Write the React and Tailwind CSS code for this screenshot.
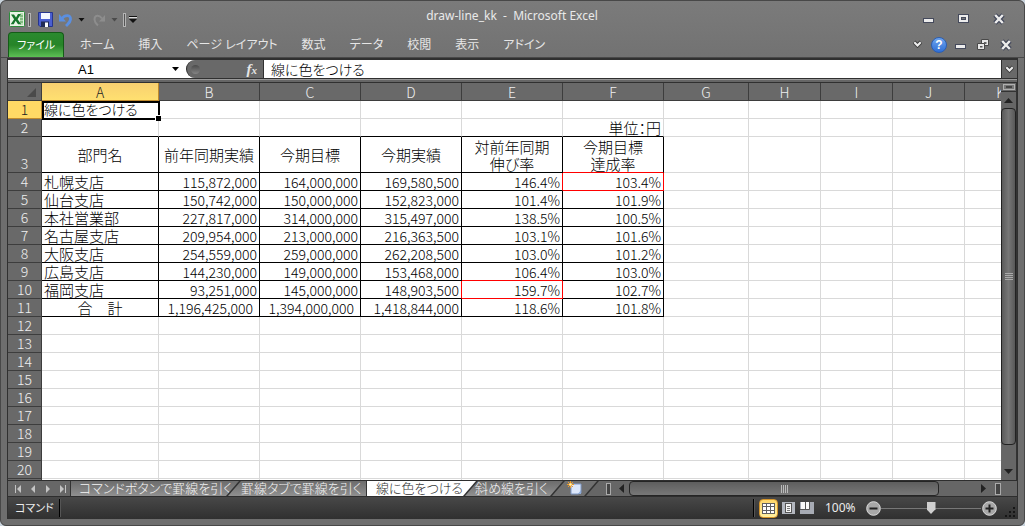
import React from "react";

const COLS = ["A", "B", "C", "D", "E", "F", "G", "H", "I", "J", "K"];
const COL_WIDTHS = ["w-[117px]", "w-[101px]", "w-[101px]", "w-[101px]", "w-[101px]", "w-[101px]", "w-[85px]", "w-[72px]", "w-[72px]", "w-[72px]", ""];

const ROWS = {
  1: ["線に色をつける"],
  2: ["", "", "", "", "", "単位：円"],
  3: ["部門名", "前年同期実績", "今期目標", "今期実績", "対前年同期\n伸び率", "今期目標\n達成率"],
  4: ["札幌支店", "115,872,000", "164,000,000", "169,580,500", "146.4%", "103.4%"],
  5: ["仙台支店", "150,742,000", "150,000,000", "152,823,000", "101.4%", "101.9%"],
  6: ["本社営業部", "227,817,000", "314,000,000", "315,497,000", "138.5%", "100.5%"],
  7: ["名古屋支店", "209,954,000", "213,000,000", "216,363,500", "103.1%", "101.6%"],
  8: ["大阪支店", "254,559,000", "259,000,000", "262,208,500", "103.0%", "101.2%"],
  9: ["広島支店", "144,230,000", "149,000,000", "153,468,000", "106.4%", "103.0%"],
  10: ["福岡支店", "93,251,000", "145,000,000", "148,903,500", "159.7%", "102.7%"],
  11: ["合　計", "1,196,425,000", "1,394,000,000", "1,418,844,000", "118.6%", "101.8%"],
};

const RED_RIGHT = ["E4", "F4", "D10", "E10"];
const RED_BOTTOM = ["F3", "F4", "E9", "E10"];

function borderClasses(row, c) {
  const key = COLS[c] + row;
  const inTable = c < 6;
  let right = "border-r-[#d9d9d9]";
  let bottom = "border-b-[#d9d9d9]";
  if (inTable && row >= 3 && row <= 11) right = "border-r-black";
  if (inTable && row >= 2 && row <= 11) bottom = "border-b-black";
  if (RED_RIGHT.includes(key)) right = "border-r-[#ff0000]";
  if (RED_BOTTOM.includes(key)) bottom = "border-b-[#ff0000]";
  return right + " " + bottom;
}

function alignClasses(row, c) {
  if (row === 3) return "text-center whitespace-pre-line leading-[17px]";
  if (row === 2) return "pr-0.5 text-right leading-[17px]";
  if (c === 0) return "leading-[17px] " + (row === 11 ? "text-center" : "pl-0.5 text-left");
  const line = "pt-0.5 leading-[15px] text-right [font-feature-settings:normal] ";
  return line + (row === 11 && c < 3 ? "pr-1.5" : "pr-0.5");
}

function Cell({ row, c }) {
  const text = (ROWS[row] || [])[c] || "";
  const kanji = row === 2 || row === 3 || (c === 0 && row > 3);
  return (
    <td className={`relative border-r border-b p-0 whitespace-nowrap ${kanji ? "text-[15px]" : "text-sm"} ${borderClasses(row, c)} ${alignClasses(row, c)}`}>
      {text}
      {row === 1 && c === 0 && (
        <div className="pointer-events-none absolute top-0 left-0 -right-0.5 -bottom-0.5 z-10 border-2 border-black">
          <div className="absolute -right-[3px] -bottom-[3px] size-[6px] border-t border-l border-white bg-black" />
        </div>
      )}
    </td>
  );
}

function Sheet() {
  const rows = Array.from({ length: 20 }, (_, i) => i + 1);
  return (
    <div className="min-h-0 min-w-0 flex-1 overflow-hidden bg-white [font-family:'Noto_Sans_CJK_JP',sans-serif]">
      <table className="w-[1029px] min-w-full table-fixed border-separate border-spacing-0 font-light text-black">
        <colgroup>
          <col className="w-[34px]" />
          {COLS.map((n, i) => <col key={n} className={COL_WIDTHS[i]} />)}
        </colgroup>
        <thead>
          <tr className="h-[18px]">
            <th className="border-r border-b border-[#3d3d3d] bg-[#696969] p-0">
              <svg className="ml-auto block h-3 w-3.5" viewBox="0 0 14 12"><path d="M9 2v9H0z" fill="#4a4a4a" /></svg>
            </th>
            {COLS.map((n, i) => (
              <th key={n} scope="col" className={`border-r border-b p-0 pt-0.5 text-sm leading-[15px] font-light ${i === 0 ? "border-[#c08a2c] bg-linear-to-b from-[#f8d070] to-[#ffe070] text-[#222]" : "border-[#3d3d3d] bg-[#696969] text-[#f0f0f0]"}`}>{n}</th>
            ))}
          </tr>
        </thead>
        <tbody>
          {rows.map((r) => (
            <tr key={r} className={r === 3 ? "h-9" : "h-[18px]"}>
              <th scope="row" className={`border-r border-b p-0 text-center align-bottom text-sm leading-[17px] font-light [font-feature-settings:normal] ${r === 1 ? "border-[#c08a2c] bg-[#ffd965] text-[#222]" : "border-[#3d3d3d] bg-[#696969] text-[#f0f0f0]"}`}>{r}</th>
              {COLS.map((n, c) => <Cell key={n} row={r} c={c} />)}
            </tr>
          ))}
          <tr className="h-[18px]">
            <td className="border-r border-[#3d3d3d] bg-[#696969]" />
            {COLS.map((n) => <td key={n} className="border-r border-[#d9d9d9]" />)}
          </tr>
        </tbody>
      </table>
    </div>
  );
}

function IconButton({ label, className, children }) {
  return <button type="button" aria-label={label} className={`flex shrink-0 items-center justify-center ${className}`}>{children}</button>;
}

const Minimize = () => (
  <svg width="12" height="12" viewBox="0 0 12 12"><rect x=".5" y="5.5" width="10" height="4" fill="#ececec" stroke="#454a5c" /></svg>
);
const Maximize = () => (
  <svg width="12" height="12" viewBox="0 0 12 12"><rect x=".5" y="1.5" width="10" height="8" fill="#ececec" stroke="#454a5c" /><rect x="3.5" y="4.5" width="4" height="2" fill="#777" stroke="#454a5c" /></svg>
);
const Close = () => (
  <svg width="12" height="12" viewBox="0 0 12 12"><path d="M2 2l8 8M10 2l-8 8" stroke="#454a5c" strokeWidth="4.6" /><path d="M2.2 2l7.6 8M9.8 2L2.2 10" stroke="#ececec" strokeWidth="2.4" /></svg>
);
const Restore = () => (
  <svg width="12" height="12" viewBox="0 0 12 12"><path d="M4.5.5h7v6h-7z" fill="#e8e8e8" stroke="#494949" /><path d="M7 3h2.500v2H7z" fill="#666" /><path d="M.5 4.500h7v6h-7z" fill="#e8e8e8" stroke="#494949" /><path d="M3 7h2.500v1.500H3z" fill="#555" /></svg>
);
const Chevron = ({ size = 9 }) => (
  <svg width={size} height={size} viewBox="0 0 9 9"><path d="M1 2l3.500 3.500L8 2" fill="none" stroke="#3d3d3d" strokeWidth="4" /><path d="M1.300 2.200l3.200 3.300 3.200-3.300" fill="none" stroke="#eee" strokeWidth="2" /></svg>
);

function TitleBar() {
  return (
    <header className="flex h-[29px] shrink-0 items-end pr-[19px] pl-2">
      <div className="flex h-[21px] w-[171px] shrink-0 items-center">
        <svg width="16" height="17" viewBox="0 0 16 17" aria-label="Excel">
          <rect x=".5" y=".5" width="15" height="15" rx="1" fill="#e9f4e6" stroke="#2e8b3c" />
          <path d="M11 2h3v12h-3z" fill="#b9dcb5" /><path d="M11 5h3M11 8h3M11 11h3" stroke="#4c9c50" />
          <path d="M2 3.500h3l2 3 2-3.500h3L8.600 8.200l3.600 5H9l-2.300-3.400-2 3.400H1.700l3.400-5z" fill="#16752c" />
        </svg>
        <span className="ml-[3px] h-3.5 w-[3px] border border-[#b5b5b5] bg-[#555]" />
        <IconButton label="上書き保存" className="ml-1.5 size-4">
          <svg width="15" height="15" viewBox="0 0 15 15"><path d="M.5.5h14v14H2L.5 13z" fill="#4b5fd0" stroke="#26358f" /><path d="M3 1h9v6H3z" fill="#f4f6ff" /><path d="M3 9.500h8V15H3z" fill="#222c55" /><path d="M7 10.500h3V15H7z" fill="#fff" /></svg>
        </IconButton>
        <IconButton label="元に戻す" className="ml-1.5 size-[14px]">
          <svg width="14" height="14" viewBox="0 0 14 14"><path d="M3 5.500C6 1.500 12 1.500 11.500 6.500 11.200 9.500 9 11 7 13" fill="none" stroke="#5b8fe0" strokeWidth="2.800" /><path d="M0 1v7.500h7z" fill="#5b8fe0" /></svg>
        </IconButton>
        <IconButton label="元に戻す操作の一覧" className="ml-1 size-[9px]"><svg width="7" height="5" viewBox="0 0 7 5"><path d="M.5 1h6L3.500 4.500z" fill="#111" /></svg></IconButton>
        <IconButton label="やり直し" className="ml-1.5 size-[14px]">
          <svg width="14" height="14" viewBox="0 0 14 14"><path d="M10 5.500C7 1.500 2.500 2 2.500 6.500 2.600 9.500 4.500 11 6 12.500" fill="none" stroke="#8d8d8d" strokeWidth="2" /><path d="M13 2v6.500H7z" fill="#8d8d8d" /></svg>
        </IconButton>
        <IconButton label="やり直し操作の一覧" className="ml-1 size-[9px]"><svg width="7" height="5" viewBox="0 0 7 5"><path d="M.5 1h6L3.500 4.500z" fill="#4b4b4b" /></svg></IconButton>
        <span className="mr-0.5 ml-1 h-3.5 w-[3px] shrink-0 border border-[#b5b5b5] bg-[#555]" />
        <IconButton label="クイック アクセス ツール バーのユーザー設定" className="size-[9px]"><svg width="8" height="9" viewBox="0 0 8 9"><path d="M0 1.500h8" stroke="#111" /><path d="M0 2.500h8" stroke="#ddd" /><path d="M0 4h8L4 8z" fill="#111" /></svg></IconButton>
      </div>
      <h1 className="flex-1 self-center whitespace-pre text-center text-xs leading-4 font-normal text-[#e9e9e9] [font-family:'Noto_Sans',sans-serif]">draw-line_kk  -  Microsoft Excel</h1>
      <div className="flex h-[23px] w-[161px] shrink-0 items-center justify-end gap-[23px]">
        <IconButton label="最小化" className="size-3"><Minimize /></IconButton>
        <IconButton label="最大化" className="size-3"><Maximize /></IconButton>
        <IconButton label="閉じる" className="size-3"><Close /></IconButton>
      </div>
    </header>
  );
}

function Ribbon() {
  const tabs = ["ホーム", "挿入", "ページ レイアウト", "数式", "データ", "校閲", "表示", "アドイン"];
  return (
    <nav className="flex h-7 shrink-0 items-end border-b border-[#494949] pr-3 pl-[7px] text-xs">
      <button type="button" className="h-[25px] w-14 rounded-t-sm border border-b-0 border-[#145c17] bg-linear-to-b from-[#2b8a2f] via-[#268428] to-[#5dc055] text-[11px] text-white">ファイル</button>
      <div className="ml-4 flex h-[25px] flex-1 items-center gap-6 text-[#e6e6e6]">
        {tabs.map((t) => <button type="button" key={t} className="whitespace-nowrap">{t}</button>)}
      </div>
      <div className="flex h-[25px] shrink-0 items-center">
        <IconButton label="リボンの最小化" className="mr-[9px] size-[9px]"><Chevron /></IconButton>
        <IconButton label="ヘルプ" className="mr-2 size-4 rounded-full border border-[#2b5eb4] bg-linear-to-b from-[#6fa5ee] to-[#2f6fd6] font-bold leading-none text-white">?</IconButton>
        <IconButton label="ブックを最小化" className="mr-[10px] size-3"><Minimize /></IconButton>
        <IconButton label="ウィンドウを元のサイズに戻す" className="mr-[11px] size-3"><Restore /></IconButton>
        <IconButton label="ブックを閉じる" className="size-3"><Close /></IconButton>
      </div>
    </nav>
  );
}

function FormulaBar() {
  return (
    <div className="flex h-[21px] shrink-0 border-y-2 border-b border-[#303030] bg-[#5c5c5c]">
      <div className="flex w-[178px] shrink-0 bg-white">
        <input aria-label="名前ボックス" defaultValue="A1" className="h-full w-[156px] min-w-0 text-center text-[13px] text-black outline-none" />
        <IconButton label="名前の一覧" className="w-[22px]"><svg width="7" height="4" viewBox="0 0 7 4"><path d="M0 0h7L3.500 4z" fill="#000" /></svg></IconButton>
      </div>
      <div className="flex w-[77px] shrink-0 items-center justify-between bg-white">
        <div className="flex h-full flex-1 items-center justify-between rounded-l-full border-l border-[#2b2b2b] bg-[#696969] pr-1.5 pl-1">
          <span className="size-[9px] rounded-full bg-linear-to-b from-[#4b4b4b] to-[#858585]" />
          <button type="button" aria-label="関数の挿入" className="text-[15px] leading-none font-bold text-[#e6e6e6] italic [font-family:'Liberation_Serif',serif]">f<span className="text-[11px]">x</span></button>
        </div>
      </div>
      <input aria-label="数式バー" defaultValue="線に色をつける" className="min-w-0 flex-1 border-l border-[#303030] bg-white pl-[7px] text-sm font-light text-black outline-none [font-family:'Noto_Sans_CJK_JP',sans-serif]" />
      <IconButton label="数式バーの展開" className="w-4 border-l border-[#303030] bg-[#696969]"><Chevron /></IconButton>
    </div>
  );
}

function VerticalScroll() {
  return (
    <div className="flex w-4 shrink-0 flex-col items-stretch border-r border-[#333] bg-[#666]">
      <div className="flex h-[9px] items-center justify-center border-b border-[#333]"><span className="h-[6px] w-3 border border-[#b0b0b0] bg-[#777]"><span className="mx-auto mt-px block h-0.5 w-1.5 bg-[#444]" /></span></div>
      <IconButton label="上へスクロール" className="h-4"><svg width="9" height="5" viewBox="0 0 9 5"><path d="M0 5l4.500-5L9 5z" fill="#222" /></svg></IconButton>
      <div className="flex flex-1 flex-col items-center justify-center gap-px rounded-sm border border-[#222] bg-linear-to-r from-[#5b5b5b] via-[#777] to-[#585858]">
        {[0, 1, 2, 3].map((i) => <span key={i} className="h-px w-2 bg-[#aaa]" />)}
      </div>
      <IconButton label="下へスクロール" className="mt-[22px] mb-1 h-[9px]"><svg width="9" height="5" viewBox="0 0 9 5"><path d="M0 0h9L4.500 5z" fill="#222" /></svg></IconButton>
    </div>
  );
}

function NavIcon({ label, d }) {
  return <IconButton label={label} className="size-[15px]"><svg width="8" height="8" viewBox="0 0 8 8"><path d={d} fill="#c4c4c4" /></svg></IconButton>;
}

function SheetTabs() {
  const base = "h-[15px] shrink-0 whitespace-nowrap text-[13px] leading-[13px] pb-0.5 font-light";
  const idle = "bg-linear-to-b from-[#6c6c6c] to-[#909090] text-[#f4f4f4]";
  return (
    <div className="flex h-[17px] shrink-0 items-start overflow-hidden border-y border-[#2e2e2e] bg-[#444]">
      <div className="flex h-full w-[62px] shrink-0 items-center bg-[#676767] pl-0.5">
        <NavIcon label="先頭のシート" d="M1 0h1v8H1zM7 0v8L3 4z" />
        <NavIcon label="前のシート" d="M6 0v8L2 4z" />
        <NavIcon label="次のシート" d="M2 0v8l4-4z" />
        <NavIcon label="最後のシート" d="M6 0h1v8H6zM1 0v8l4-4z" />
      </div>
      <div className="flex h-full w-[534px] shrink-0 bg-[#333] [font-family:'Noto_Sans_CJK_JP',sans-serif]">
        <button type="button" className={`${base} ${idle} ml-px w-[168px] pl-2 text-left [clip-path:polygon(0_0,100%_0,calc(100%-13px)_100%,0_100%)]`}>コマンドボタンで罫線を引く</button>
        <button type="button" className={`${base} ${idle} -ml-[11px] w-[138px] pl-[13px] text-left [clip-path:polygon(13px_0,100%_0,100%_100%,0_100%)]`}>罫線タブで罫線を引く</button>
        <button type="button" className={`${base} ml-px w-[109px] bg-white pl-[9px] text-left text-[#333] [clip-path:polygon(0_0,100%_0,calc(100%-13px)_100%,0_100%)]`}>線に色をつける</button>
        <button type="button" className={`${base} ${idle} -ml-[11px] w-[98px] pl-[10px] text-left [clip-path:polygon(13px_0,100%_0,calc(100%-13px)_100%,0_100%)]`}>斜め線を引く</button>
        <button type="button" aria-label="ワークシートの挿入" className={`${base} -ml-[11px] flex w-[45px] items-center justify-center bg-[#707070] [clip-path:polygon(13px_0,100%_0,calc(100%-13px)_100%,0_100%)]`}>
          <svg width="15" height="14" viewBox="0 0 15 14" className="shrink-0"><path d="M4 3h10v9l-3 1H4z" fill="#dce7fa" stroke="#7e98c5" /><path d="M14 9l-3 4h3z" fill="#8eabd9" /><path d="M3.500 0v7M0 3.500h7M1 1l5 5M6 1L1 6" stroke="#f19b24" /><circle cx="3.500" cy="3.500" r="1.200" fill="#fff4b0" /></svg>
        </button>
        <span className={`${base} -ml-[11px] flex-1 bg-[#666] [clip-path:polygon(13px_0,100%_0,100%_100%,0_100%)]`} />
      </div>
      <div className="flex h-full min-w-0 flex-1 items-center bg-[#666]">
        <span className="mx-0.5 h-3 w-[5px] border border-[#aaa] bg-[#444]" />
        <IconButton label="左へスクロール" className="h-full w-4"><svg width="5" height="9" viewBox="0 0 5 9"><path d="M5 0v9L0 4.500z" fill="#222" /></svg></IconButton>
        <div className="flex h-full flex-1 items-center justify-center gap-px rounded-sm border border-[#252525] bg-linear-to-b from-[#5e5e5e] to-[#787878]">
          {[0, 1, 2, 3].map((i) => <span key={i} className="h-2 w-px bg-[#bbb]" />)}
        </div>
        <IconButton label="右へスクロール" className="ml-9 h-full w-4"><svg width="5" height="9" viewBox="0 0 5 9"><path d="M0 0v9l5-4.500z" fill="#222" /></svg></IconButton>
        <span className="mr-4 ml-1 h-3 w-[6px] border border-[#aaa] bg-[#444]" />
      </div>
    </div>
  );
}

function StatusBar() {
  return (
    <footer className="flex h-[22px] shrink-0 items-center bg-linear-to-b from-[#484848] to-[#303030] text-xs text-[#ececec]">
      <span className="w-[51px] shrink-0 pl-[7px] text-[11px] whitespace-nowrap">コマンド</span>
      <span className="h-[18px] w-0.5 border-l border-black bg-[#555]" />
      <div className="flex-1" />
      <span className="h-[18px] w-0.5 border-l border-black bg-[#555]" />
      <IconButton label="標準" className="ml-1 size-[19px] rounded-sm border border-[#d5952a] bg-linear-to-b from-[#ffd768] to-[#fff0a0]">
        <svg width="13" height="11" viewBox="0 0 13 11"><rect width="13" height="11" fill="#606060" /><path d="M1 1h3v2H1zM5 1h3v2H5zM9 1h3v2H9zM1 4h3v3H1zM5 4h3v3H5zM9 4h3v3H9zM1 8h3v2H1zM5 8h3v2H5zM9 8h3v2H9z" fill="#fff" /></svg>
      </IconButton>
      <IconButton label="ページ レイアウト表示" className="ml-0.5 size-4">
        <svg width="13" height="12" viewBox="0 0 13 12"><rect width="13" height="12" fill="#b3b7bf" /><rect x="3.500" y="1.500" width="6" height="9" fill="#f5f5f5" stroke="#555" /><path d="M5 4.500h3M5 6.500h3M5 8.500h3" stroke="#777" /></svg>
      </IconButton>
      <IconButton label="改ページ プレビュー" className="ml-[3px] size-4">
        <svg width="14" height="12" viewBox="0 0 14 12"><rect width="14" height="12" fill="#a7abb4" /><path d="M1 0h4v7H1zM6 0h3v7H6z" fill="#fafafa" /><path d="M5.500 0v7.500M0 7.500h9.500V0" fill="none" stroke="#555" /></svg>
      </IconButton>
      <span className="ml-2.5 w-10 shrink-0 [font-family:'Noto_Sans',sans-serif]">100%</span>
      <IconButton label="縮小" className="size-4"><svg width="15" height="15" viewBox="0 0 15 15"><circle cx="7.500" cy="7.500" r="6.800" fill="#a8a8a8" stroke="#ddd" /><path d="M3.500 7.500h8" stroke="#222" strokeWidth="2" /></svg></IconButton>
      <input type="range" aria-label="ズーム" min="0" max="100" defaultValue="50" className="h-4 w-[100px] appearance-none bg-[linear-gradient(#777,#777)] bg-[length:100%_1px] bg-center bg-no-repeat [&::-webkit-slider-thumb]:h-3 [&::-webkit-slider-thumb]:w-[9px] [&::-webkit-slider-thumb]:appearance-none [&::-webkit-slider-thumb]:bg-[#cfcfcf] [&::-webkit-slider-thumb]:[clip-path:polygon(0_0,100%_0,100%_60%,50%_100%,0_60%)]" />
      <IconButton label="拡大" className="size-4"><svg width="15" height="15" viewBox="0 0 15 15"><circle cx="7.500" cy="7.500" r="6.800" fill="#a8a8a8" stroke="#ddd" /><path d="M3.500 7.500h8M7.500 3.500v8" stroke="#222" strokeWidth="2" /></svg></IconButton>
      <svg className="ml-2 self-end" width="12" height="12" viewBox="0 0 12 12"><path d="M8 0h2v2H8zM4 4h2v2H4zM8 4h2v2H8zM0 8h2v2H0zM4 8h2v2H4zM8 8h2v2H8z" fill="#161616" /></svg>
    </footer>
  );
}

export default function App() {
  return (
    <div className="h-screen bg-[#c9d3dc] [font-family:'Liberation_Sans','Noto_Sans_CJK_JP',sans-serif]">
      <div className="flex h-full flex-col overflow-hidden rounded-md border border-[#484848] bg-[#717171] bg-linear-to-b from-[#7b7b7b] to-[#6e6e6e] to-[80px] [font-feature-settings:'palt']">
        <TitleBar />
        <Ribbon />
        <main className="mx-1.5 mb-1.5 flex min-h-0 flex-1 flex-col border-r border-l border-[#303030]">
          <FormulaBar />
          <div className="flex h-1 shrink-0 flex-col border-b border-[#303030] bg-[#666]"><span className="h-px bg-[#999]" /></div>
          <div className="flex min-h-0 flex-1">
            <Sheet />
            <VerticalScroll />
          </div>
          <SheetTabs />
          <StatusBar />
        </main>
      </div>
    </div>
  );
}
